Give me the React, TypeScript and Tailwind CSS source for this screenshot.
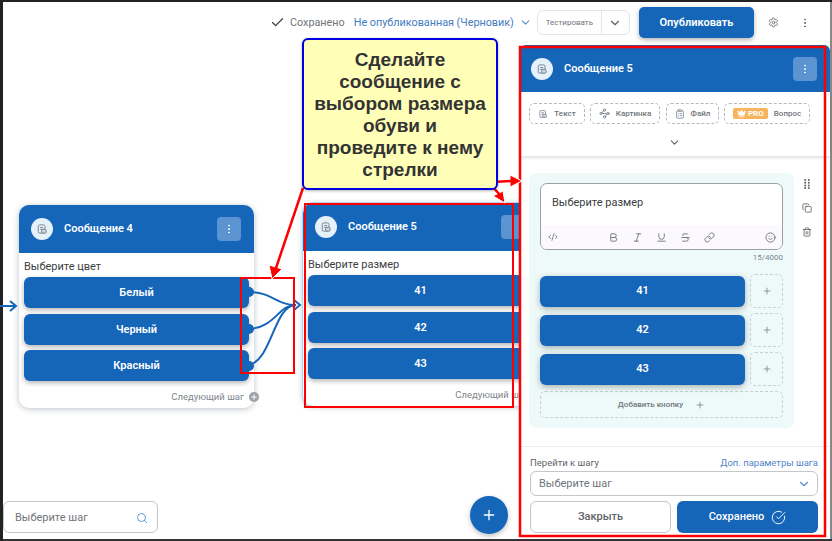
import { Check, ChevronDown, Settings, EllipsisVertical, CodeXml, Bold, Italic, Underline, Strikethrough, Link, Smile, Copy, Trash2, Plus, Search, CircleCheckBig, Crown, Waypoints, ClipboardList } from "lucide-react";

const BLUE = "#1565b8";

function DocIcon({ size = 12 }: { size?: number }) {
  return (
    <svg width={size} height={size} viewBox="0 0 16 16" fill="none" stroke="#7a8490" strokeWidth="1.3">
      <rect x="3" y="2.5" width="9" height="11" rx="2" />
      <path d="M5.5 6h4M5.5 8.5h4" />
      <rect x="7.5" y="8.5" width="6" height="5" rx="1.5" fill="#cfd6dd" />
    </svg>
  );
}

function NodeHeader({ title }: { title: string }) {
  return (
    <div className="h-[48px] shrink-0 bg-[#1565b8] flex items-center pl-[12px] pr-[13px]">
      <div className="w-[22px] h-[22px] rounded-full bg-[#e4f0fa] flex items-center justify-center">
        <DocIcon />
      </div>
      <span className="ml-[11px] pt-[1px] text-[11px] font-semibold text-white">{title}</span>
      <div className="ml-auto w-[24px] h-[24px] rounded-[4px] bg-[#5b94d1] flex items-center justify-center">
        <EllipsisVertical size={12} color="#ffffff" />
      </div>
    </div>
  );
}

function FlowNode({ title, prompt, options, className }: { title: string; prompt: string; options: string[]; className: string }) {
  return (
    <div className={`absolute w-[235px] h-[203px] rounded-[10px] bg-white overflow-hidden flex flex-col shadow-[0_1px_6px_rgba(60,80,100,0.35)] ${className}`}>
      <NodeHeader title={title} />
      <div className="px-[5px] pt-[6px] text-[11px] leading-[16px] text-[#3c4043]">{prompt}</div>
      <div className="px-[5px] pt-[2px] flex flex-col gap-[5.5px]">
        {options.map((o) => (
          <div key={o} className="h-[31px] pt-[2px] rounded-[6px] bg-[#1565b8] text-white text-[11px] font-semibold flex items-center justify-center shadow-[0_2px_5px_rgba(0,0,0,0.3)]">
            {o}
          </div>
        ))}
      </div>
      <div className="mt-auto h-[18px] pr-[10px] flex items-start justify-end text-[9.5px] leading-[14px] text-[#80868b]">Следующий шаг</div>
    </div>
  );
}

function Chip({ icon, label, className }: { icon: React.ReactNode; label: string; className: string }) {
  return (
    <div className={`h-[21px] rounded-[5px] border border-dashed border-[#b5b9bd] flex items-center justify-center gap-[6px] text-[8px] font-medium text-[#70757a] ${className}`}>
      {icon}
      <span>{label}</span>
    </div>
  );
}

function OptionRow({ label }: { label: string }) {
  return (
    <div className="flex items-center gap-[5px] h-[34px]">
      <div className="w-[205px] h-[31px] rounded-[6px] bg-[#1565b8] text-white text-[11px] font-semibold flex items-center justify-center shadow-[0_2px_6px_rgba(0,0,0,0.3)]">
        {label}
      </div>
      <div className="w-[33px] h-[34px] rounded-[5px] border border-dashed border-[#c9d0d3] flex items-center justify-center">
        <Plus size={10} color="#80868b" />
      </div>
    </div>
  );
}

function SidePanel() {
  return (
    <aside className="w-[310px] shrink-0 h-[492px] bg-white flex flex-col">
      <div className="h-[47px] shrink-0 bg-[#1565b8] rounded-t-[6px] flex items-center pl-[11px] pr-[13px]">
        <div className="w-[22px] h-[22px] rounded-full bg-[#e4f0fa] flex items-center justify-center">
          <DocIcon />
        </div>
        <span className="ml-[11px] pt-[2px] text-[11px] font-semibold text-white">Сообщение 5</span>
        <div className="ml-auto w-[24px] h-[24px] rounded-[4px] bg-[#5b94d1] flex items-center justify-center">
          <EllipsisVertical size={12} color="#ffffff" />
        </div>
      </div>
      <div className="h-[64px] shrink-0 shadow-[0_2px_3px_rgba(0,0,0,0.12)] flex flex-col">
        <div className="pt-[11px] pl-[9px] flex gap-[5px]">
          <Chip className="w-[56px]" label="Текст" icon={<DocIcon size={10} />} />
          <Chip className="w-[70px]" label="Картинка" icon={<Waypoints size={11} color="#7a8490" />} />
          <Chip className="w-[53px] ml-[1px]" label="Файл" icon={<ClipboardList size={10} color="#7a8490" />} />
          <Chip
            className="w-[86px]"
            label="Вопрос"
            icon={
              <span className="w-[35px] h-[11px] rounded-[2px] bg-[#f9b45c] text-white text-[8px] font-bold flex items-center justify-center gap-[2px]">
                <Crown size={9} color="#ffffff" fill="#ffffff" />
                PRO
              </span>
            }
          />
        </div>
        <div className="mt-[12px] pr-[2px] flex justify-center">
          <ChevronDown size={13} color="#5f6368" />
        </div>
      </div>
      <div className="flex pl-[9px] pt-[17px] flex-1">
        <div className="w-[265px] h-[255px] rounded-[7px] bg-[#eefafa] px-[11px] pt-[10px]">
          <div className="h-[67px] rounded-[7px] border border-[#9aa0a6] bg-white overflow-hidden flex flex-col">
            <div className="h-[41px] pl-[11px] pt-[11px] text-[11px] leading-[16px] text-[#3c4043]">Выберите размер</div>
            <div className="flex-1 bg-[#fbf8fe] flex items-center pl-[7px] pr-[6px] text-[#70757a]">
              <CodeXml size={10} />
              <div className="ml-[50px] flex gap-[13px]">
                <Bold size={11} />
                <Italic size={11} />
                <Underline size={11} />
                <Strikethrough size={11} />
                <Link size={11} />
              </div>
              <Smile size={11} className="ml-auto" />
            </div>
          </div>
          <div className="h-[16px] mt-[1px] text-right text-[8px] leading-[14px] text-[#80868b]">15/4000</div>
          <div className="mt-[7px] flex flex-col gap-[5px]">
            <OptionRow label="41" />
            <OptionRow label="42" />
            <OptionRow label="43" />
          </div>
          <div className="mt-[5px] h-[27px] rounded-[5px] border border-dashed border-[#c9d0d3] flex items-center justify-center gap-[12px] text-[8px] font-medium text-[#70757a]">
            Добавить кнопку
            <Plus size={10} color="#80868b" />
          </div>
        </div>
        <div className="ml-[7px] w-[11px] flex flex-col items-center gap-[14px] pt-[6px] text-[#5f6368]">
          <svg width="10" height="10" viewBox="0 0 10 10" fill="#5f6368">
            {[1, 3.7, 6.4, 9].map((y) =>
              [3.2, 6.8].map((x) => <circle key={`${x}-${y}`} cx={x} cy={y} r="1" />)
            )}
          </svg>
          <Copy size={10} />
          <Trash2 size={10} />
        </div>
      </div>
      <div className="h-[91px] shrink-0 border-t border-[#ececec] pl-[10px] pr-[12px] pt-[8px] flex flex-col">
        <div className="h-[16px] flex justify-between text-[9.5px] leading-[15px]">
          <span className="text-[#5f6368]">Перейти к шагу</span>
          <span className="text-[#4f86c6]">Доп. параметры шага</span>
        </div>
        <div className="h-[25px] pt-[1px] rounded-[6px] border border-[#c4c7ca] flex items-center justify-between pl-[8px] pr-[6px] text-[11px] text-[#70757a]">
          Выберите шаг
          <ChevronDown size={14} color="#5b8fcb" />
        </div>
        <div className="mt-[5px] flex gap-[6px]">
          <div className="w-[141px] h-[32px] pt-[1px] rounded-[6px] border border-[#c4c7ca] flex items-center justify-center text-[11px] font-medium text-[#5f6368]">Закрыть</div>
          <div className="w-[141px] h-[32px] pt-[1px] rounded-[6px] bg-[#1565b8] flex items-center justify-center gap-[7px] text-[11px] font-medium text-white">
            Сохранено
            <CircleCheckBig size={15} color="#ffffff" strokeWidth={1.5} />
          </div>
        </div>
      </div>
    </aside>
  );
}

function Canvas() {
  return (
    <div className="relative flex-1 overflow-hidden">
      <FlowNode className="left-[16px] top-[160px]" title="Сообщение 4" prompt="Выберите цвет" options={["Белый", "Черный", "Красный"]} />
      <FlowNode className="left-[300px] top-[158px] outline outline-[1px] outline-[#b8d4ee]" title="Сообщение 5" prompt="Выберите размер" options={["41", "42", "43"]} />
      <div className="absolute left-[246px] top-[347px] w-[10px] h-[10px] rounded-full bg-[#9aa0a6] flex items-center justify-center">
        <Plus size={8} color="#ffffff" strokeWidth={3} />
      </div>
      <div className="absolute left-0 top-[456px] w-[155px] h-[32px] pt-[2px] rounded-[6px] border border-[#c4c7ca] bg-white flex items-center justify-between pl-[11px] pr-[9px] text-[11px] text-[#70757a]">
        Выберите шаг
        <Search size={12} color="#5b9bd5" />
      </div>
      <div className="absolute left-[467px] top-[451px] w-[38px] h-[38px] rounded-full bg-[#1565b8] flex items-center justify-center shadow-[0_2px_5px_rgba(0,0,0,0.25)]">
        <Plus size={16} color="#ffffff" />
      </div>
    </div>
  );
}

function Overlay() {
  const arrow = (x1: number, y1: number, x2: number, y2: number, head: string) => (
    <g>
      <path d={`M${x1} ${y1}L${x2} ${y2}`} stroke="#ffffff" strokeWidth="5" />
      <polygon points={head} fill="#ff0000" stroke="#ffffff" strokeWidth="1" />
      <path d={`M${x1} ${y1}L${x2} ${y2}`} stroke="#ff0000" strokeWidth="2.5" />
    </g>
  );
  return (
    <svg className="absolute left-0 top-0 pointer-events-none" width="832" height="541" viewBox="0 0 832 541" fill="none">
      <path d="M0 306H16M10 301l6 5-6 5" stroke={BLUE} strokeWidth="2" />
      <g stroke={BLUE} strokeWidth="2">
        <path d="M249 292C272 292 276 305 296 305" />
        <path d="M249 329C276 327 278 305 296 305" />
        <path d="M249 365C272 360 274 305 296 305" />
        <path d="M294 300l6 5-6 5" />
      </g>
      <g fill={BLUE}>
        <circle cx="249" cy="292" r="5" />
        <circle cx="249" cy="329" r="5" />
        <circle cx="249" cy="366" r="5" />
      </g>
      <rect x="241" y="278" width="53" height="95" stroke="#ff0000" strokeWidth="2" />
      <rect x="305" y="204" width="208" height="203" stroke="#ff0000" strokeWidth="2" />
      <rect x="520" y="47" width="305" height="489" stroke="#ff0000" strokeWidth="2.5" />
      {arrow(303, 188, 276, 268, "269,265 282,269 272,279")}
      {arrow(491, 185, 500, 195, "493,196 503,191 505,203")}
      {arrow(494, 182, 511, 181, "510,175 522,181 510,187")}
    </svg>
  );
}

export default function App() {
  return (
    <div className="relative w-[832px] h-[541px] overflow-hidden bg-white pl-[3px] pt-[2px] pb-[2px] flex flex-col shadow-[inset_3px_2px_0_#222,inset_0_-2px_0_#333,inset_-2px_0_0_#888] font-['Roboto',sans-serif]">
      <header className="h-[43px] shrink-0 flex items-start pt-[5px] pl-[267px]">
        <div className="h-[31px] flex items-center whitespace-nowrap">
          <Check size={15} color="#3c4043" />
          <span className="ml-[5px] pt-[1px] text-[10.8px] text-[#70757a]">Сохранено</span>
          <span className="ml-[9px] pt-[1px] text-[10.8px] text-[#3f7cc0]">Не опубликованная (Черновик)</span>
          <ChevronDown size={13} color="#5b8fcb" className="ml-[5px]" />
        </div>
        <div className="ml-[5px] mt-[3px] w-[93px] h-[25px] rounded-[6px] border border-[#e3e5e7] flex items-center text-[8px] text-[#70757a]">
          <span className="w-[64px] h-full border-r border-[#e3e5e7] flex items-center justify-center">Тестировать</span>
          <span className="flex-1 flex justify-center"><ChevronDown size={14} color="#5f6368" /></span>
        </div>
        <div className="ml-[9px] w-[115px] h-[31px] pt-[1px] rounded-[5px] bg-[#1565b8] text-white text-[11px] font-semibold flex items-center justify-center shadow-[0_2px_5px_rgba(0,0,0,0.3)]">Опубликовать</div>
        <Settings size={11} color="#70757a" className="ml-[14px] mt-[10px]" />
        <EllipsisVertical size={12} color="#5f6368" className="ml-[20px] mt-[10px]" />
      </header>
      <div className="flex flex-1 min-h-0">
        <Canvas />
        <SidePanel />
        <div className="w-[2px] shrink-0" />
      </div>
      <Overlay />
      <div className="absolute left-[302px] top-[38px] w-[196px] h-[152px] pt-[1px] rounded-[6px] border-2 border-[#0000e0] bg-[#ffffb8] flex items-center justify-center text-center text-[19px] leading-[22px] font-bold text-[#333333] shadow-[0_1px_3px_rgba(0,0,0,0.3)] font-['Liberation_Sans',sans-serif]">
        Сделайте<br />сообщение с<br />выбором размера<br />обуви и<br />проведите к нему<br />стрелки
      </div>
    </div>
  );
}
